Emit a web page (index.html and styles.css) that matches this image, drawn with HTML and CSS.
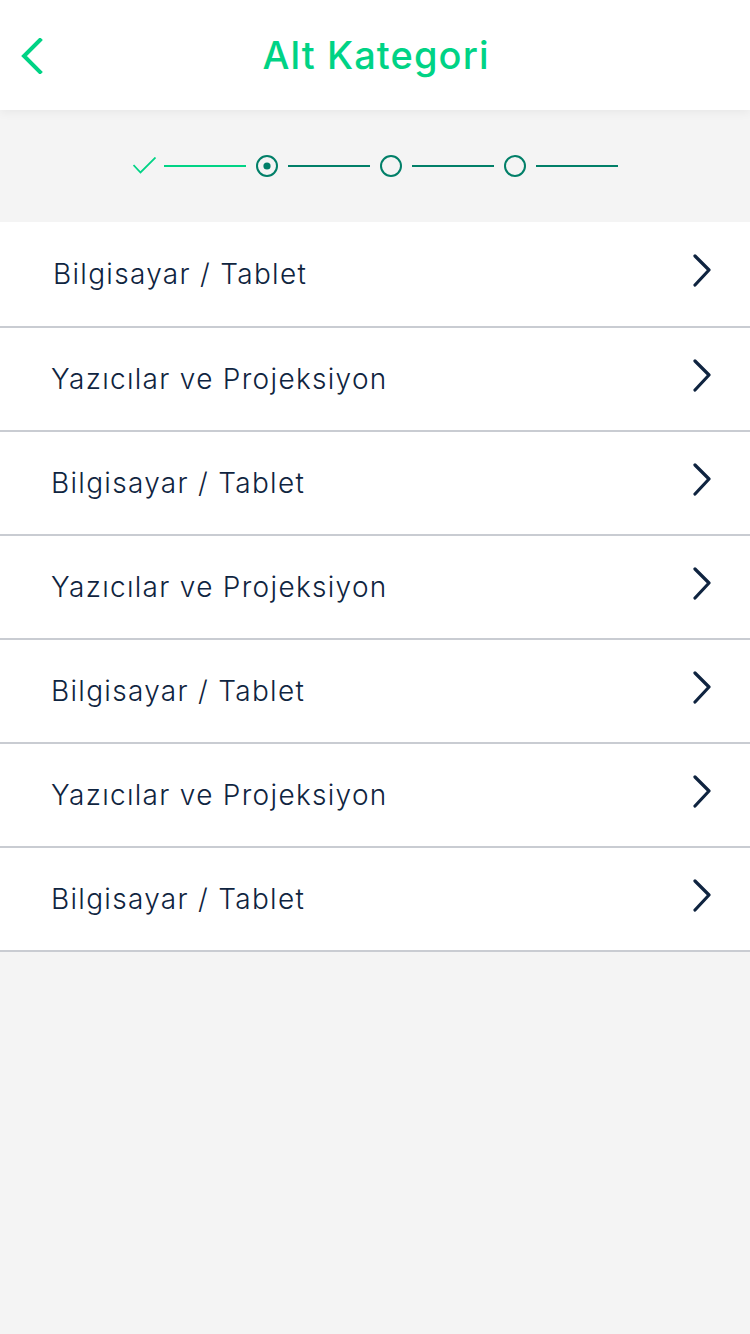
FILE: index.html
```html
<!DOCTYPE html>
<html lang="tr">
<head>
<meta charset="utf-8">
<title>Alt Kategori</title>
<link rel="stylesheet" href="styles.css">
</head>
<body>
<header class="topbar">
  <button class="back" aria-label="Geri">
    <svg width="24" height="36" viewBox="0 0 24 36"><path d="M19 2 L3 18 L19 34" fill="none" stroke="#00d385" stroke-width="4" stroke-linecap="square" stroke-linejoin="miter"/></svg>
  </button>
  <h1 class="title">Alt Kategori</h1>
</header>
<section class="stepper">
  <svg class="check" width="23" height="18" viewBox="0 0 23 18"><path d="M0.5 8 L7.5 15.5 L22.5 0.5" fill="none" stroke="#00d385" stroke-width="1.8"/></svg>
  <span class="line done"></span>
  <svg class="dot" width="22" height="22" viewBox="0 0 22 22"><circle cx="11" cy="11" r="10" fill="none" stroke="#017f68" stroke-width="2"/><circle cx="11" cy="11" r="3.6" fill="#017f68"/></svg>
  <span class="line"></span>
  <svg class="dot" width="22" height="22" viewBox="0 0 22 22"><circle cx="11" cy="11" r="10" fill="none" stroke="#017f68" stroke-width="2"/></svg>
  <span class="line"></span>
  <svg class="dot" width="22" height="22" viewBox="0 0 22 22"><circle cx="11" cy="11" r="10" fill="none" stroke="#017f68" stroke-width="2"/></svg>
  <span class="line"></span>
</section>
<ul class="list">
  <li class="row first"><span class="label">Bilgisayar / Tablet</span><svg class="chev" width="20" height="34" viewBox="0 0 20 34"><path d="M3 2 L17 16 L3 31" fill="none" stroke="#0f2440" stroke-width="3.2" stroke-linecap="round" stroke-linejoin="round"/></svg></li>
  <li class="row"><span class="label">Yazıcılar ve Projeksiyon</span><svg class="chev" width="20" height="34" viewBox="0 0 20 34"><path d="M3 2 L17 16 L3 31" fill="none" stroke="#0f2440" stroke-width="3.2" stroke-linecap="round" stroke-linejoin="round"/></svg></li>
  <li class="row"><span class="label">Bilgisayar / Tablet</span><svg class="chev" width="20" height="34" viewBox="0 0 20 34"><path d="M3 2 L17 16 L3 31" fill="none" stroke="#0f2440" stroke-width="3.2" stroke-linecap="round" stroke-linejoin="round"/></svg></li>
  <li class="row"><span class="label">Yazıcılar ve Projeksiyon</span><svg class="chev" width="20" height="34" viewBox="0 0 20 34"><path d="M3 2 L17 16 L3 31" fill="none" stroke="#0f2440" stroke-width="3.2" stroke-linecap="round" stroke-linejoin="round"/></svg></li>
  <li class="row"><span class="label">Bilgisayar / Tablet</span><svg class="chev" width="20" height="34" viewBox="0 0 20 34"><path d="M3 2 L17 16 L3 31" fill="none" stroke="#0f2440" stroke-width="3.2" stroke-linecap="round" stroke-linejoin="round"/></svg></li>
  <li class="row"><span class="label">Yazıcılar ve Projeksiyon</span><svg class="chev" width="20" height="34" viewBox="0 0 20 34"><path d="M3 2 L17 16 L3 31" fill="none" stroke="#0f2440" stroke-width="3.2" stroke-linecap="round" stroke-linejoin="round"/></svg></li>
  <li class="row"><span class="label">Bilgisayar / Tablet</span><svg class="chev" width="20" height="34" viewBox="0 0 20 34"><path d="M3 2 L17 16 L3 31" fill="none" stroke="#0f2440" stroke-width="3.2" stroke-linecap="round" stroke-linejoin="round"/></svg></li>
</ul>
</body>
</html>
```
FILE: styles.css
```css
* { box-sizing: border-box; }
html, body {
  margin: 0;
  padding: 0;
  background: #f4f4f4;
  font-family: "Inter", "Noto Sans", "Liberation Sans", sans-serif;
}
body { min-height: 1334px; }

.topbar {
  position: relative;
  z-index: 2;
  height: 110px;
  background: #fff;
  box-shadow: 0 2px 10px rgba(0, 0, 0, 0.06);
  display: flex;
  align-items: center;
  justify-content: center;
}
.back {
  position: absolute;
  left: 21px;
  top: 38px;
  padding: 0;
  border: 0;
  background: none;
  line-height: 0;
}
.title {
  margin: 0;
  font-size: 38px;
  font-weight: 500;
  color: #00d385;
  letter-spacing: 1.1px;
  line-height: 1;
  transform: translateX(1px);
}

.stepper {
  height: 112px;
  display: flex;
  align-items: center;
  justify-content: center;
  gap: 10px;
}
.check { margin-right: -2px; margin-top: 0; }
.line {
  display: block;
  width: 82px;
  height: 2px;
  background: #017f68;
}
.line.done { background: #00d385; }

.list {
  list-style: none;
  margin: 0;
  padding: 0;
}
.row {
  height: 104px;
  background: #fff;
  border-bottom: 2px solid #c9ccd2;
  display: flex;
  align-items: center;
  justify-content: space-between;
  padding: 0 38px 0 51px;
}
.row.first { padding-left: 53px; height: 106px; }
.label {
  font-size: 28px;
  font-weight: 300;
  color: #0f2440;
  letter-spacing: 1.3px;
}
.chev { margin-top: -6px; }
```
